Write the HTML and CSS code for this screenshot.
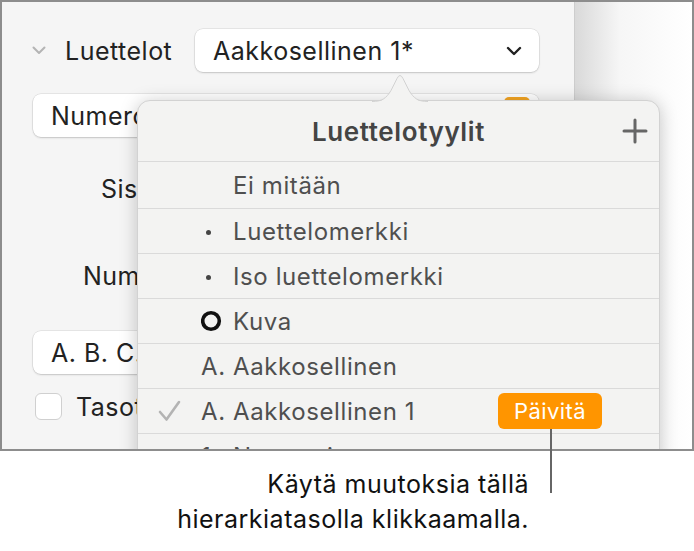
FILE: index.html
```html
<!DOCTYPE html>
<html lang="fi">

<head>
    <meta charset="UTF-8">
    <title>Luettelotyylit</title>
    <link rel="stylesheet" href="styles.css">
</head>

<body>
    <div id="page">
        <div id="shot">
            <div id="sidebar">
                <div class="lists-row">
                    <svg class="disclosure" width="14" height="9" viewBox="0 0 14 9">
                        <polyline points="1.5,1.5 7,7 12.5,1.5" fill="none" stroke="#b4b4b4" stroke-width="2" stroke-linecap="round" stroke-linejoin="round" />
                    </svg>
                    <span class="lists-label">Luettelot</span>
                    <div class="popup select">
                        <span>Aakkosellinen 1*</span>
                        <svg width="16" height="10" viewBox="0 0 16 10">
                            <polyline points="2,2 8,8 14,2" fill="none" stroke="#222" stroke-width="2.4" stroke-linecap="round" stroke-linejoin="round" />
                        </svg>
                    </div>
                </div>

                <div class="popup wide">
                    <span>Numeroitu</span>
                    <span class="swatch"></span>
                </div>

                <div class="field-label sis">Sisennys</div>
                <div class="field-label num">Numerointi</div>

                <div class="popup wide abc">
                    <span>A. B. C.</span>
                </div>

                <div class="check-row">
                    <span class="checkbox"></span>
                    <span>Tasot</span>
                </div>
            </div>
            <div id="canvas"></div>

            <!-- popover over the sidebar -->
            <div id="popover">
                <svg class="beak" width="56" height="28" viewBox="0 0 56 28">
                    <path d="M0,28 C10,28 14,25 19,17 L25,5 Q28,-1 31,5 L37,17 C42,25 46,28 56,28 Z" fill="#f3f3f2" />
                    <path d="M0,27.5 C10,27.5 14,24.5 19,16.5 L25,4.5 Q28,-1.5 31,4.5 L37,16.5 C42,24.5 46,27.5 56,27.5" fill="none" stroke="#d2d2d2" stroke-width="1" />
                </svg>
                <div class="pop-head">
                    <span class="pop-title">Luettelotyylit</span>
                    <svg class="plus" width="26" height="26" viewBox="0 0 26 26">
                        <line x1="13" y1="2" x2="13" y2="24" stroke="#666" stroke-width="3" stroke-linecap="round" />
                        <line x1="2" y1="13" x2="24" y2="13" stroke="#666" stroke-width="3" stroke-linecap="round" />
                    </svg>
                </div>
                <div class="style-row first">
                    <span class="tick"></span>
                    <span class="marker"></span>
                    <span>Ei mitään</span>
                </div>
                <div class="style-row">
                    <span class="tick"></span>
                    <span class="marker"><span class="dot"></span></span>
                    <span>Luettelomerkki</span>
                </div>
                <div class="style-row">
                    <span class="tick"></span>
                    <span class="marker"><span class="dot"></span></span>
                    <span>Iso luettelomerkki</span>
                </div>
                <div class="style-row">
                    <span class="tick"></span>
                    <span class="marker">
                        <svg width="24" height="24" viewBox="0 0 24 24">
                            <circle cx="10" cy="12" r="8.3" fill="none" stroke="#111" stroke-width="3.6" />
                        </svg>
                    </span>
                    <span>Kuva</span>
                </div>
                <div class="style-row">
                    <span class="tick"></span>
                    <span class="marker">A.</span>
                    <span>Aakkosellinen</span>
                </div>
                <div class="style-row">
                    <span class="tick">
                        <svg width="24" height="22" viewBox="0 0 24 22">
                            <polyline points="2,12 8.5,19.5 21,2" fill="none" stroke="#b3b3b3" stroke-width="2.6" stroke-linecap="round" stroke-linejoin="round" />
                        </svg>
                    </span>
                    <span class="marker">A.</span>
                    <span>Aakkosellinen 1</span>
                    <span class="update">Päivitä</span>
                </div>
                <div class="style-row">
                    <span class="tick"></span>
                    <span class="marker">1.</span>
                    <span>Numeroitu</span>
                </div>
            </div>
        </div>

        <div class="callout-line"></div>
        <div id="callout">
            Käytä muutoksia tällä<br>
            hierarkiatasolla klikkaamalla.
        </div>
    </div>
</body>

</html>
```
FILE: styles.css
```css
body {
    margin: 0;
    font-family: Inter, "Noto Sans", sans-serif;
    background: #fff;
}

#page {
    position: relative;
    width: 694px;
    height: 551px;
}

#shot {
    position: relative;
    display: flex;
    height: 447px;
    border: 2px solid #8d8d8d;
    overflow: hidden;
}

#sidebar {
    width: 506px;
    flex-shrink: 0;
    padding: 27px 35px 0 31px;
    background: #f5f5f5;
    border-right: 1px solid #cdcdcd;
    color: #222;
    font-size: 25px;
    letter-spacing: 0.5px;
}

#canvas {
    flex: 1;
    background: linear-gradient(to right, #d9d9d9, #f6f6f6 45px, #fff);
}

.lists-row {
    display: flex;
    align-items: center;
    height: 43px;
}

.disclosure {
    margin-left: -1px;
}

.lists-label {
    margin-left: 19px;
}

.popup {
    display: flex;
    align-items: center;
    height: 43px;
    box-sizing: border-box;
    padding: 0 18px;
    background: #fff;
    border-radius: 8px;
    box-shadow: 0 0 0 0.5px rgba(0, 0, 0, 0.12), 0 1px 2px rgba(0, 0, 0, 0.15);
}

.select {
    margin-left: auto;
    width: 344px;
}

.select svg {
    margin-left: auto;
    margin-right: -1px;
}

.wide {
    margin-top: 22px;
    width: 506px;
}

.swatch {
    margin-left: auto;
    margin-right: -9px;
    margin-top: 3px;
    align-self: flex-start;
    width: 26px;
    height: 24px;
    border-radius: 5px;
    background: #f5a623;
}

.field-label {
    height: 30px;
}

.sis {
    margin-top: 37px;
    padding-left: 68px;
}

.num {
    margin-top: 57px;
    padding-left: 50px;
}

.abc {
    margin-top: 40px;
}

.check-row {
    display: flex;
    align-items: center;
    gap: 14px;
    margin-top: 18px;
    height: 29px;
}

.checkbox {
    width: 27px;
    height: 27px;
    margin-left: 2px;
    box-sizing: border-box;
    border: 1px solid #d0d0d0;
    border-radius: 6px;
    background: #fff;
}

#popover {
    position: absolute;
    left: 135px;
    top: 98px;
    width: 523px;
    height: 400px;
    box-sizing: border-box;
    background: #f3f3f2;
    border: 1px solid #d2d2d2;
    border-radius: 13px;
    box-shadow: 0 2px 18px rgba(0, 0, 0, 0.22);
    color: #4f4f4f;
    font-size: 24px;
    letter-spacing: 0.6px;
}

.beak {
    position: absolute;
    left: 234px;
    top: -27px;
}

.pop-head {
    position: relative;
    display: flex;
    align-items: center;
    justify-content: center;
    height: 60px;
    border-bottom: 1px solid #dadada;
}

.pop-title {
    font-size: 26px;
    font-weight: 600;
    letter-spacing: 0.6px;
    color: #444;
}

.plus {
    position: absolute;
    right: 11px;
    top: 17px;
}

.style-row {
    display: flex;
    align-items: center;
    height: 44px;
    padding-left: 20px;
    border-bottom: 1px solid #dadada;
}

.style-row.first {
    height: 46px;
}

.tick {
    display: flex;
    width: 43px;
}

.marker {
    display: flex;
    align-items: center;
    width: 32px;
    height: 24px;
}

.dot {
    width: 5px;
    height: 5px;
    margin-left: 5px;
    margin-top: 2px;
    border-radius: 50%;
    background: #444;
}

.update {
    margin-left: auto;
    margin-right: 57px;
    padding: 0 16px;
    height: 36px;
    line-height: 36px;
    border-radius: 6px;
    background: #ff9500;
    color: #fff;
    font-size: 22px;
    letter-spacing: 0.4px;
}

.callout-line {
    position: absolute;
    left: 550px;
    top: 429px;
    width: 2px;
    height: 64px;
    background: #666;
}

#callout {
    padding: 16px 165px 0 0;
    text-align: right;
    font-size: 25px;
    letter-spacing: 0.5px;
    line-height: 35px;
    color: #111;
}
```
